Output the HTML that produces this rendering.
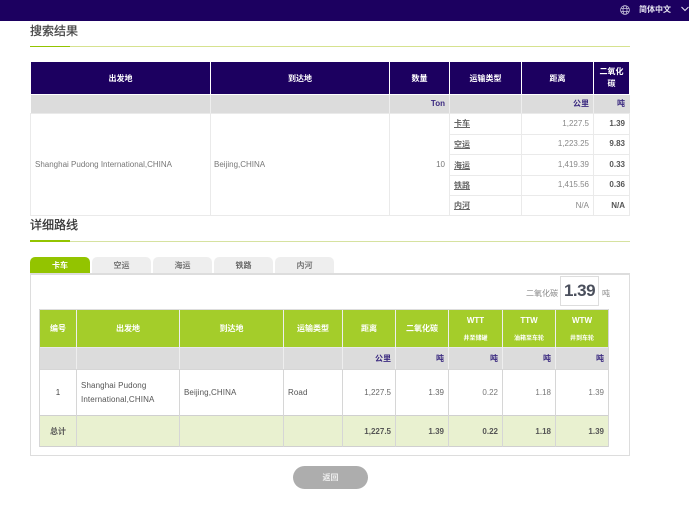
<!DOCTYPE html>
<html lang="zh"><head><meta charset="utf-8"><title>搜索结果</title>
<style>
html,body{margin:0;padding:0;background:#fff}
body{width:689px;height:507px;overflow:hidden;position:relative;font-family:"Liberation Sans","Noto Sans CJK SC",sans-serif;font-size:8px;color:#666;filter:blur(.3px)}
div,a,span.a{position:absolute;white-space:nowrap}
.r{background:#fff}
.c{display:flex;align-items:center;justify-content:center;text-align:center}
.e{display:flex;align-items:center;justify-content:flex-end;text-align:right}
.s{display:flex;align-items:center;justify-content:flex-start}
.h1{font-weight:bold;color:#fff}
.u{font-weight:bold;color:#3b2a80}
.b{font-weight:bold;color:#555}
.l{color:#666;text-decoration:underline;font-weight:bold}
.g{color:#555}
</style></head><body>
<!-- top bar -->
<div style="left:0;top:0;width:689px;height:21px;background:#1c0060"></div>
<svg style="position:absolute;left:619px;top:4px" width="12" height="12" viewBox="0 0 12 12" fill="none" stroke="#c9c4dc" stroke-width=".8"><circle cx="6" cy="6" r="4.4"/><ellipse cx="6" cy="6" rx="2" ry="4.4"/><path d="M1.6 4.4h8.8M1.6 7.6h8.8"/></svg>
<div class="h1" style="left:639px;top:3px;height:14px;line-height:14px;color:#e8e6f2">简体中文</div>
<svg style="position:absolute;left:681px;top:5px" width="8" height="8" viewBox="0 0 8 8" fill="none" stroke="#e8e6f2" stroke-width="1"><path d="M.5 2l3.5 3.5L7.500 2"/></svg>

<!-- section 1 -->
<div style="left:30px;top:23px;font-size:12px;line-height:17px;color:#444;-webkit-text-stroke:.25px #444">搜索结果</div>
<div style="left:30px;top:46px;width:600px;height:1px;background:#d6e28f"></div>
<div style="left:30px;top:46px;width:40px;height:1px;background:#93c400"></div>

<!-- table 1 header -->
<div class="c h1" style="left:31px;top:62px;width:179px;height:32px;background:#1c0060">出发地</div>
<div class="c h1" style="left:211px;top:62px;width:178px;height:32px;background:#1c0060">到达地</div>
<div class="c h1" style="left:390px;top:62px;width:59px;height:32px;background:#1c0060">数量</div>
<div class="c h1" style="left:450px;top:62px;width:71px;height:32px;background:#1c0060">运输类型</div>
<div class="c h1" style="left:522px;top:62px;width:71px;height:32px;background:#1c0060">距离</div>
<div class="c h1" style="left:594px;top:62px;width:35px;height:32px;background:#1c0060;line-height:12px">二氧化<br>碳</div>
<!-- table 1 unit row -->
<div style="left:31px;top:95px;width:599px;height:18px;background:#dcdcdc"></div>
<div style="left:210px;top:95px;width:1px;height:18px;background:#eee"></div>
<div style="left:389px;top:95px;width:1px;height:18px;background:#eee"></div>
<div style="left:449px;top:95px;width:1px;height:18px;background:#eee"></div>
<div style="left:521px;top:95px;width:1px;height:18px;background:#eee"></div>
<div style="left:593px;top:95px;width:1px;height:18px;background:#eee"></div>
<div class="e u" style="left:390px;top:94px;width:55px;height:18px">Ton</div>
<div class="e u" style="left:522px;top:94px;width:67px;height:18px">公里</div>
<div class="e u" style="left:594px;top:94px;width:31px;height:18px">吨</div>
<!-- table 1 borders -->
<div style="left:30px;top:113px;width:1px;height:103px;background:#eaeaea"></div>
<div style="left:210px;top:113px;width:1px;height:103px;background:#eaeaea"></div>
<div style="left:389px;top:113px;width:1px;height:103px;background:#eaeaea"></div>
<div style="left:449px;top:113px;width:1px;height:103px;background:#eaeaea"></div>
<div style="left:521px;top:113px;width:1px;height:103px;background:#eaeaea"></div>
<div style="left:593px;top:113px;width:1px;height:103px;background:#eaeaea"></div>
<div style="left:629px;top:113px;width:1px;height:103px;background:#eaeaea"></div>
<div style="left:30px;top:113px;width:600px;height:1px;background:#eaeaea"></div>
<div style="left:30px;top:215px;width:600px;height:1px;background:#eaeaea"></div>
<div style="left:449px;top:134px;width:181px;height:1px;background:#eaeaea"></div>
<div style="left:449px;top:154px;width:181px;height:1px;background:#eaeaea"></div>
<div style="left:449px;top:175px;width:181px;height:1px;background:#eaeaea"></div>
<div style="left:449px;top:195px;width:181px;height:1px;background:#eaeaea"></div>

<div class="s" style="left:35px;top:114px;height:101px;color:#777">Shanghai Pudong International,CHINA</div>
<div class="s" style="left:214px;top:114px;height:101px;color:#777">Beijing,CHINA</div>
<div class="e" style="left:390px;top:114px;width:55px;height:101px;color:#777">10</div>

<div class="s l" style="left:454px;top:113px;height:20px">卡车</div>
<div class="s l" style="left:454px;top:135px;height:19px">空运</div>
<div class="s l" style="left:454px;top:155px;height:20px">海运</div>
<div class="s l" style="left:454px;top:176px;height:19px">铁路</div>
<div class="s l" style="left:454px;top:196px;height:19px">内河</div>

<div class="e" style="left:522px;top:113px;width:67px;height:20px;color:#888">1,227.5</div>
<div class="e" style="left:522px;top:133px;width:67px;height:20px;color:#888">1,223.25</div>
<div class="e" style="left:522px;top:154px;width:67px;height:20px;color:#888">1,419.39</div>
<div class="e" style="left:522px;top:174px;width:67px;height:20px;color:#888">1,415.56</div>
<div class="e" style="left:522px;top:195px;width:67px;height:20px;color:#888">N/A</div>
<div class="e b" style="left:594px;top:113px;width:31px;height:20px">1.39</div>
<div class="e b" style="left:594px;top:133px;width:31px;height:20px">9.83</div>
<div class="e b" style="left:594px;top:154px;width:31px;height:20px">0.33</div>
<div class="e b" style="left:594px;top:174px;width:31px;height:20px">0.36</div>
<div class="e b" style="left:594px;top:195px;width:31px;height:20px">N/A</div>

<!-- section 2 -->
<div style="left:30px;top:217px;font-size:12px;line-height:17px;color:#333;-webkit-text-stroke:.25px #333">详细路线</div>
<div style="left:30px;top:241px;width:600px;height:1px;background:#d6e2a0"></div>
<div style="left:30px;top:240px;width:40px;height:2px;background:#93c400"></div>

<!-- tabs -->
<div class="c" style="left:30px;top:257px;width:60px;height:16px;background:#93c400;border-radius:5px 5px 0 0;color:#fff;font-weight:bold">卡车</div>
<div class="c g" style="left:92px;top:257px;width:59px;height:16px;background:#eee;border-radius:5px 5px 0 0;font-weight:bold;color:#777">空运</div>
<div class="c g" style="left:153px;top:257px;width:59px;height:16px;background:#eee;border-radius:5px 5px 0 0;font-weight:bold;color:#777">海运</div>
<div class="c g" style="left:214px;top:257px;width:59px;height:16px;background:#eee;border-radius:5px 5px 0 0;font-weight:bold;color:#666">铁路</div>
<div class="c g" style="left:275px;top:257px;width:59px;height:16px;background:#eee;border-radius:5px 5px 0 0;font-weight:bold;color:#777">内河</div>

<!-- panel -->
<div style="left:30px;top:273px;width:598px;height:180px;border:1px solid #ddd;border-top:2px solid #ddd;background:#fff"></div>

<!-- co2 -->
<div style="left:526px;top:289px;height:10px;line-height:10px;color:#888">二氧化碳</div>
<div class="c" style="left:560px;top:276px;width:37px;height:28px;border:1px solid #ddd;font-size:17px;letter-spacing:-.5px;font-weight:bold;color:#4a4f5c">1.39</div>
<div style="left:602px;top:289px;height:10px;line-height:10px;color:#888">吨</div>

<!-- table 2 backgrounds -->
<div style="left:40px;top:310px;width:568px;height:37px;background:#a4cd2a"></div>
<div style="left:40px;top:348px;width:568px;height:21px;background:#dcdcdc"></div>
<div style="left:40px;top:416px;width:568px;height:30px;background:#e9f1d0"></div>
<!-- horizontal -->
<div style="left:39px;top:309px;width:570px;height:1px;background:#ddd"></div>
<div style="left:39px;top:347px;width:570px;height:1px;background:#e8e8e8"></div>
<div style="left:39px;top:369px;width:570px;height:1px;background:#d6d6d6"></div>
<div style="left:39px;top:415px;width:570px;height:1px;background:#d0d0d0"></div>
<div style="left:39px;top:446px;width:570px;height:1px;background:#d0d0d0"></div>
<!-- vertical header + unit (white-ish) -->
<div style="left:39px;top:309px;width:1px;height:138px;background:#d6d6d6"></div>
<div style="left:76px;top:310px;width:1px;height:59px;background:#eee"></div>
<div style="left:179px;top:310px;width:1px;height:59px;background:#eee"></div>
<div style="left:283px;top:310px;width:1px;height:59px;background:#eee"></div>
<div style="left:342px;top:310px;width:1px;height:59px;background:#eee"></div>
<div style="left:395px;top:310px;width:1px;height:59px;background:#eee"></div>
<div style="left:448px;top:310px;width:1px;height:59px;background:#eee"></div>
<div style="left:502px;top:310px;width:1px;height:59px;background:#eee"></div>
<div style="left:555px;top:310px;width:1px;height:59px;background:#eee"></div>
<div style="left:608px;top:309px;width:1px;height:138px;background:#d6d6d6"></div>
<!-- vertical body -->
<div style="left:76px;top:369px;width:1px;height:78px;background:#d6d6d6"></div>
<div style="left:179px;top:369px;width:1px;height:78px;background:#d6d6d6"></div>
<div style="left:283px;top:369px;width:1px;height:78px;background:#d6d6d6"></div>
<div style="left:342px;top:369px;width:1px;height:78px;background:#d6d6d6"></div>
<div style="left:395px;top:369px;width:1px;height:78px;background:#d6d6d6"></div>
<div style="left:448px;top:369px;width:1px;height:78px;background:#d6d6d6"></div>
<div style="left:502px;top:369px;width:1px;height:78px;background:#d6d6d6"></div>
<div style="left:555px;top:369px;width:1px;height:78px;background:#d6d6d6"></div>

<!-- table 2 header text -->
<div class="c h1" style="left:40px;top:310px;width:36px;height:37px">编号</div>
<div class="c h1" style="left:77px;top:310px;width:102px;height:37px">出发地</div>
<div class="c h1" style="left:180px;top:310px;width:103px;height:37px">到达地</div>
<div class="c h1" style="left:284px;top:310px;width:58px;height:37px">运输类型</div>
<div class="c h1" style="left:343px;top:310px;width:52px;height:37px">距离</div>
<div class="c h1" style="left:396px;top:310px;width:52px;height:37px">二氧化碳</div>
<div class="c h1" style="left:449px;top:314px;width:53px;height:12px">WTT</div>
<div class="c h1" style="left:449px;top:331px;width:53px;height:12px;font-size:6px">井至储罐</div>
<div class="c h1" style="left:503px;top:314px;width:52px;height:12px">TTW</div>
<div class="c h1" style="left:503px;top:331px;width:52px;height:12px;font-size:6px">油箱至车轮</div>
<div class="c h1" style="left:556px;top:314px;width:52px;height:12px">WTW</div>
<div class="c h1" style="left:556px;top:331px;width:52px;height:12px;font-size:6px">井到车轮</div>

<!-- units -->
<div class="e u" style="left:343px;top:348px;width:48px;height:21px">公里</div>
<div class="e u" style="left:396px;top:348px;width:48px;height:21px">吨</div>
<div class="e u" style="left:449px;top:348px;width:49px;height:21px">吨</div>
<div class="e u" style="left:503px;top:348px;width:48px;height:21px">吨</div>
<div class="e u" style="left:556px;top:348px;width:48px;height:21px">吨</div>

<!-- data -->
<div class="c" style="left:40px;top:370px;width:36px;height:45px;color:#444">1</div>
<div style="left:81px;top:379px;line-height:14px;color:#555;letter-spacing:.12px">Shanghai Pudong<br>International,CHINA</div>
<div class="s" style="left:184px;top:370px;height:45px;color:#555;letter-spacing:.1px">Beijing,CHINA</div>
<div class="s" style="left:288px;top:370px;height:45px;color:#555;letter-spacing:.1px">Road</div>
<div class="e" style="left:343px;top:370px;width:48px;height:45px;color:#666">1,227.5</div>
<div class="e" style="left:396px;top:370px;width:48px;height:45px;color:#666">1.39</div>
<div class="e" style="left:449px;top:370px;width:49px;height:45px;color:#777">0.22</div>
<div class="e" style="left:503px;top:370px;width:48px;height:45px;color:#777">1.18</div>
<div class="e" style="left:556px;top:370px;width:48px;height:45px;color:#777">1.39</div>

<!-- total -->
<div class="c b" style="left:40px;top:416px;width:36px;height:30px">总计</div>
<div class="e b" style="left:343px;top:416px;width:48px;height:30px">1,227.5</div>
<div class="e b" style="left:396px;top:416px;width:48px;height:30px">1.39</div>
<div class="e b" style="left:449px;top:416px;width:49px;height:30px">0.22</div>
<div class="e b" style="left:503px;top:416px;width:48px;height:30px">1.18</div>
<div class="e b" style="left:556px;top:416px;width:48px;height:30px">1.39</div>

<!-- button -->
<div class="c" style="left:293px;top:466px;width:75px;height:23px;background:#adadad;border-radius:12px;color:#eee;font-weight:bold">返回</div>
</body></html>
